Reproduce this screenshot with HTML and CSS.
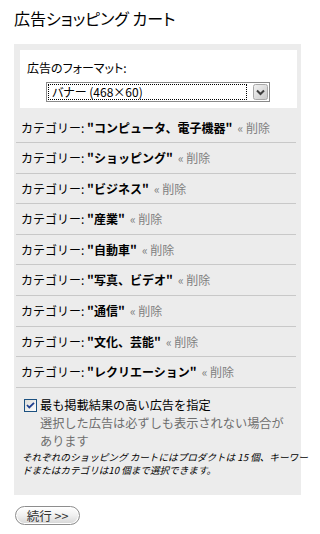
FILE: index.html
```html
<!DOCTYPE html>
<html lang="ja">
<head>
<meta charset="utf-8">
<title>広告ショッピング カート</title>
<link rel="stylesheet" href="styles.css">
</head>
<body>
<h1 class="title">広告ショッピング カート</h1>
<div class="panel">
  <div class="format-box">
    <div class="format-label">広告のフォーマット:</div>
    <div class="select" role="combobox" aria-expanded="false">
      <span class="select-value">バナー (468×60)</span>
      <span class="select-arrow">
        <svg width="15" height="16" viewBox="0 0 15 16">
          <defs>
            <linearGradient id="ag" x1="0" y1="0" x2="1" y2="1">
              <stop offset="0" stop-color="#f4f4f4"/>
              <stop offset="1" stop-color="#c9c9c9"/>
            </linearGradient>
          </defs>
          <rect x="0.5" y="0.5" width="14" height="15" rx="2" fill="url(#ag)" stroke="#a8a8a8"/>
          <path d="M4 6.5 L7.5 10 L11 6.5" fill="none" stroke="#404040" stroke-width="2"/>
        </svg>
      </span>
    </div>
  </div>
  <ul class="cats">
    <li class="cat">カテゴリー: <b class="cat-name">"コンピュータ、電子機器"</b><a class="del">« 削除</a></li>
    <li class="cat">カテゴリー: <b class="cat-name">"ショッピング"</b><a class="del">« 削除</a></li>
    <li class="cat">カテゴリー: <b class="cat-name">"ビジネス"</b><a class="del">« 削除</a></li>
    <li class="cat">カテゴリー: <b class="cat-name">"産業"</b><a class="del">« 削除</a></li>
    <li class="cat">カテゴリー: <b class="cat-name">"自動車"</b><a class="del">« 削除</a></li>
    <li class="cat">カテゴリー: <b class="cat-name">"写真、ビデオ"</b><a class="del">« 削除</a></li>
    <li class="cat">カテゴリー: <b class="cat-name">"通信"</b><a class="del">« 削除</a></li>
    <li class="cat">カテゴリー: <b class="cat-name">"文化、芸能"</b><a class="del">« 削除</a></li>
    <li class="cat">カテゴリー: <b class="cat-name">"レクリエーション"</b><a class="del">« 削除</a></li>
  </ul>
  <div class="best">
    <span class="checkbox">
      <svg width="13" height="13" viewBox="0 0 13 13">
        <defs>
          <linearGradient id="cg" x1="0" y1="0" x2="1" y2="1">
            <stop offset="0" stop-color="#dcdcd7"/>
            <stop offset="1" stop-color="#ffffff"/>
          </linearGradient>
        </defs>
        <rect x="0.5" y="0.5" width="12" height="12" fill="url(#cg)" stroke="#1c5180"/>
        <path d="M3 6 L5.3 8.5 L10 3.8" fill="none" stroke="#1f3f8f" stroke-width="1.8"/>
      </svg>
    </span>
    <div class="best-text">
      <div class="best-title">最も掲載結果の高い広告を指定</div>
      <div class="best-note">選択した広告は必ずしも表示されない場合が<br>あります</div>
    </div>
  </div>
  <p class="limit">それぞれのショッピング カートにはプロダクトは 15 個、キーワー<br>ドまたはカテゴリは10 個まで選択できます。</p>
</div>
<button class="next" type="button">続行 &gt;&gt;</button>
</body>
</html>
```

FILE: styles.css
```css
* { box-sizing: border-box; }
body {
  margin: 0;
  background: #ffffff;
  color: #000000;
  font-family: "Noto Sans CJK JP", "Noto Sans", sans-serif;
}
.title {
  margin: 8px 0 0 14px;
  font-size: 16px;
  line-height: 20px;
  font-weight: normal;
  height: 20px;
  font-feature-settings: "palt";
}
.panel {
  margin: 16px 0 0 14px;
  width: 287px;
  height: 451px;
  background: #ececec;
  padding: 6px 0 0 0;
  display: flex;
  flex-direction: column;
}
.format-box {
  margin: 0 4px 0 6px;
  background: #ffffff;
  height: 58px;
  padding: 11px 0 0 7px;
}
.format-label {
  font-size: 12px;
  line-height: 14px;
  height: 14px;
  font-feature-settings: "palt";
}
.select {
  margin: 7px 0 0 19px;
  width: 224px;
  height: 20px;
  border: 1px solid #8a8a8a;
  background: #ffffff;
  display: flex;
  align-items: center;
  padding: 1px;
}
.select-value {
  flex: 1;
  height: 16px;
  border: 1px dotted #000000;
  font-size: 12px;
  line-height: 14px;
  padding-left: 3px;
  margin-right: 6px;
  font-feature-settings: "palt";
}
.select-arrow {
  display: flex;
  width: 15px;
  height: 16px;
}
.cats {
  list-style: none;
  margin: 2px 5px 0 2px;
  padding: 0;
}
.cat {
  height: 30.6px;
  line-height: 29.6px;
  border-bottom: 1px solid #c8c8c8;
  padding-left: 5px;
  font-size: 12px;
  white-space: nowrap;
}
.cat:first-child { height: 33px; padding-top: 3px; }
.cat-name { font-weight: bold; }
.del { color: #808080; margin-left: 5px; }
.best {
  display: flex;
  align-items: flex-start;
  padding: 8px 0 0 10px;
}
.checkbox {
  display: flex;
  margin-top: 3px;
  width: 13px;
  height: 13px;
}
.best-text {
  margin-left: 3px;
  font-size: 12.2px;
  line-height: 18px;
}
.best-title { color: #000000; }
.best-note { color: #6e6e6e; }
.limit {
  margin: 1px 0 0 8px;
  font-size: 9.6px;
  line-height: 13px;
  font-style: italic;
  white-space: nowrap;
}
.next {
  margin: 11px 0 0 15px;
  width: 65px;
  height: 19px;
  border: 1px solid #8d8d8d;
  border-radius: 10px;
  background: linear-gradient(#ffffff, #f0f0f0 50%, #d6d6d6);
  box-shadow: inset 0 0 0 1px #ffffff;
  font-family: inherit;
  font-size: 12.5px;
  line-height: 15px;
  color: #333333;
  padding: 0;
  display: flex;
  align-items: center;
  justify-content: center;
}
```
